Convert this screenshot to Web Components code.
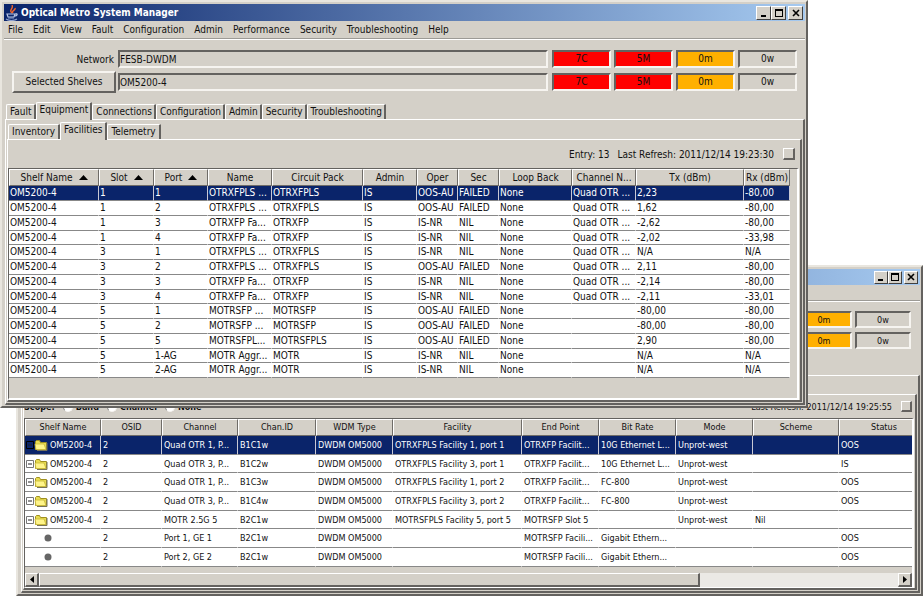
<!DOCTYPE html>
<html lang="en">
<head>
<meta charset="utf-8">
<title>Optical Metro System Manager</title>
<style>
  body {
    margin: 0;
    background: #fff;
    color: #111;
    font-family: "DejaVu Sans Condensed", "DejaVu Sans", sans-serif;
  }
</style>
</head>
<body>
<metro-desktop></metro-desktop>

<script>
// Shared bevel colours
const COLORS = `
  :host {
    --face: #d4d0c8;
    --light: #f6f4f0;
    --dark: #64625f;
    --select: #0a246a;
  }
  * { box-sizing: border-box; }
  button, input { font: inherit; color: inherit; margin: 0; border-radius: 0; }
`;

class AppWindow extends HTMLElement {
  constructor() {
    super();
    this.attachShadow({ mode: 'open' });
    this.shadowRoot.innerHTML = `
      <style>
        ${COLORS}
        :host {
          display: block;
          background: var(--face);
          border: 2px solid;
          border-color: #e9e6df var(--dark) var(--dark) #e9e6df;
          padding: 2px 1px 1px 2px;
          font-size: var(--text, 10px);
          box-sizing: border-box;
        }
        .title {
          display: flex;
          align-items: center;
          gap: 2px;
          height: var(--title-height, 17px);
          padding: 0 2px 0 1px;
          background: linear-gradient(to right, #0a246a, #a6caf0);
          color: #fff;
        }
        h1 { flex: 1; margin: 0; font-size: inherit; line-height: 16px; white-space: nowrap; }
        .buttons { display: flex; }
        .buttons button {
          display: grid;
          place-items: center;
          width: var(--button-width, 15px);
          height: var(--button-height, 14px);
          padding: 0;
          background: var(--face);
          border: 1px solid;
          border-color: #fff #404040 #404040 #fff;
          color: #000;
        }
        .buttons button:last-child { margin-left: 2px; }
        svg { display: block; }
      </style>
      <div class="title">
        <svg width="14" height="16" viewBox="0 0 14 16" fill="none">
          <path d="M7 8C3 5 9 4 7 0M8 8c-2-2 3-3 2-5" stroke="#f0642c" stroke-width="1.4"/>
          <path d="M2 9h8l-1 3H3zM10 9c3-1 3 2-1 2" stroke="#b8c6e6" stroke-width="1.2"/>
          <path d="M3 13h6M1 14c3 2 8 2 11 0" stroke="#8ea2d0" stroke-width="1.2"/>
        </svg>
        <h1></h1>
        <div class="buttons">
          <button aria-label="Minimize"><svg width="10" height="10"><path d="M2 7h5v2H2z"/></svg></button>
          <button aria-label="Maximize"><svg width="10" height="10"><path d="M1 1h8v8H1zM2 3v5h6V3z" fill-rule="evenodd"/></svg></button>
          <button aria-label="Close"><svg width="10" height="10"><path d="M2 2l6 6M8 2l-6 6" stroke="#000" stroke-width="1.6"/></svg></button>
        </div>
      </div>
      <slot></slot>
    `;
    this.shadowRoot.querySelector('h1').textContent = this.getAttribute('heading') || '';
  }
}

customElements.define('app-window', AppWindow);

class MenuBar extends HTMLElement {
  constructor() {
    super();
    this.attachShadow({ mode: 'open' });
    const items = (this.getAttribute('items') || '').split(',').filter(Boolean);
    this.shadowRoot.innerHTML = `
      <style>
        ${COLORS}
        :host { display: block; }
        nav {
          display: flex;
          gap: 10px;
          height: var(--menu-height, 18px);
          padding: 0 4px;
          border-bottom: 1px solid #9c9a95;
          box-shadow: 0 1px #fff;
        }
        button { border: 0; padding: 0; background: none; }
      </style>
      <nav>${items.map(item => `<button>${item}</button>`).join('')}</nav>
    `;
  }
}

customElements.define('menu-bar', MenuBar);

class AlarmRow extends HTMLElement {
  constructor() {
    super();
    this.attachShadow({ mode: 'open' });
    const label = this.getAttribute('label');
    const value = this.getAttribute('value');
    const head = this.hasAttribute('action')
      ? `<button id="head">${label}</button>`
      : `<label for="field">${label || ''}</label>`;
    const field = `<input id="field" readonly value="${value || ''}" aria-label="${label || ''}">`;
    const alarms = this.getAttribute('alarms').split(',');
    this.shadowRoot.innerHTML = `
      <style>
        ${COLORS}
        :host { display: flex; align-items: center; min-height: var(--row-height, 18px); }
        label, button { flex: 0 0 104px; margin-right: 2px; }
        label { text-align: right; padding-right: 2px; }
        button {
          height: 22px;
          padding: 0 0 1px;
          background: var(--face);
          border: 2px solid;
          border-color: var(--light) var(--dark) var(--dark) var(--light);
        }
        input, .alarm {
          height: var(--row-height, 18px);
          background: var(--face);
          border: 2px solid;
          border-color: var(--dark) var(--light) var(--light) var(--dark);
        }
        input { flex: 1; min-width: 0; padding: 0; outline: 0; }
        .alarms { display: flex; gap: 3px; margin-left: auto; padding-left: 4px; }
        .alarm {
          width: var(--alarm-width, 59px);
          line-height: 14px;
          text-align: center;
        }
        .C, .M { background: #f00; }
        .m { background: #ffb000; }
      </style>
      ${label ? head + field : ''}
      <div class="alarms">
        ${alarms.map(a => `<div class="alarm ${a.slice(-1)}">${a}</div>`).join('')}
      </div>
    `;
  }
}

customElements.define('alarm-row', AlarmRow);

class TabPanel extends HTMLElement {
  constructor() {
    super();
    this.attachShadow({ mode: 'open' });
    const tabs = (this.getAttribute('tabs') || '').split(',').filter(Boolean);
    const selected = this.getAttribute('selected');
    this.shadowRoot.innerHTML = `
      <style>
        ${COLORS}
        :host { display: block; }
        .tabs {
          display: flex;
          align-items: flex-end;
          height: var(--tabs-height, 17px);
          padding-left: 1px;
        }
        button {
          height: 15px;
          padding: 0 var(--tab-right, 3px) 0 3px;
          background: var(--face);
          border: solid;
          border-width: 1px 2px 0 1px;
          border-color: #fff var(--dark) #fff #fff;
          border-radius: 2px 1px 0 0;
          line-height: 14px;
        }
        button[aria-selected=true] { height: 18px; margin-bottom: -1px; padding-bottom: 4px; line-height: 13px; }
        .panel {
          border: solid;
          border-width: 1px 2px 2px 1px;
          border-color: #fff var(--dark) var(--dark) #fff;
          padding: var(--panel-padding, 0);
        }
      </style>
      <div class="tabs" role="tablist">
        ${tabs.map(tab => `<button role="tab" aria-selected="${tab === selected}">${tab}</button>`).join('')}
      </div>
      <div class="panel"><slot></slot></div>
    `;
  }
}

customElements.define('tab-panel', TabPanel);

class StatusBar extends HTMLElement {
  constructor() {
    super();
    this.attachShadow({ mode: 'open' });
    this.shadowRoot.innerHTML = `
      <style>
        ${COLORS}
        :host {
          display: flex;
          align-items: center;
          justify-content: flex-end;
          gap: 8px;
          height: var(--status-height, 28px);
          padding-right: var(--status-right, 5px);
          white-space: nowrap;
        }
        slot[name=start] { display: flex; margin-right: auto; }
        button {
          width: var(--box, 12px);
          height: var(--box, 12px);
          padding: 0;
          margin-left: 1px;
          background: var(--face);
          border: solid;
          border-width: 1px 2px 2px 1px;
          border-color: #fff var(--dark) var(--dark) #fff;
        }
      </style>
      <slot name="start"></slot>
      <slot></slot>
      <button aria-label="Refresh"></button>
    `;
  }
}

customElements.define('status-bar', StatusBar);

class ScopePicker extends HTMLElement {
  constructor() {
    super();
    this.attachShadow({ mode: 'open' });
    this.shadowRoot.innerHTML = `
      <style>
        ${COLORS}
        :host { display: flex; align-items: center; gap: 8px; font-weight: bold; }
        label { display: flex; align-items: center; gap: 3px; }
        input {
          appearance: none;
          width: 10px;
          height: 10px;
          background: #fff;
          border: 1px solid;
          border-color: #808080 #f6f4f0 #f6f4f0 #808080;
          border-radius: 50%;
        }
      </style>
      <span>Scope:</span>
      ${['Band', 'Channel', 'None'].map(name =>
        `<label><input type="radio" name="scope">${name}</label>`).join('')}
    `;
  }
}

customElements.define('scope-picker', ScopePicker);

class DataTable extends HTMLElement {
  constructor() {
    super();
    this.attachShadow({ mode: 'open' });
  }

  // columns: [title, width, sorted], a width of 0 takes the free space
  setData(columns, rows, tree = false) {
    const icon = `
      <svg class="node" width="22" height="14" viewBox="0 0 22 14">
        <path d="M.5 3.5h7v7h-7z" fill="#fff" stroke="#777"/><path d="M2 6.5h4v1H2z" fill="#222"/>
        <path d="M9.500 11.500v-8l1-1h3l1 2h6v7z" fill="#e8dc50" stroke="#a09020"/>
        <path d="M10 11.500l-1-5.500h9l2 5.500z" fill="#fff58a" stroke="#c8b838" stroke-width=".8"/>
        <path d="M21 5v7.500H11" fill="none" stroke="#77735a"/>
      </svg>`;
    const leaf = `
      <svg class="leaf" width="8" height="8"><circle cx="4" cy="4" r="3.500" fill="#666"/></svg>`;
    const arrow = `<svg class="arrow" width="9" height="5"><path d="M0 5L4.500 0 9 5z"/></svg>`;

    const cell = (text, i) => {
      if (!tree || i > 0) return `<td>${text}</td>`;
      return `<td class="tree">${text ? icon + text : leaf}</td>`;
    };

    this.shadowRoot.innerHTML = `
      <style>
        ${COLORS}
        :host {
          display: block;
          overflow: hidden;
          margin-right: 1px;
          border: solid;
          border-width: 1px 2px var(--bottom-border, 2px) 1px;
          border-color: var(--dark) #fff #fff var(--dark);
        }
        .view { overflow: hidden; padding: 0 var(--view-right, 0) var(--view-bottom, 0) 0; }
        table { width: 100%; table-layout: fixed; border-spacing: 0; }
        th, td { overflow: hidden; white-space: nowrap; padding: 0; }
        th {
          height: 17px;
          font-weight: normal;
          line-height: 15px;
          border: 1px solid;
          border-color: #fff #6f6c68 #6f6c68 #fff;
        }
        td {
          height: var(--line, 15px);
          padding-left: var(--cell-left, 1px);
          background: #fff;
          line-height: 12px;
          border-bottom: 1px solid #888;
          border-right: 1px solid #fff;
        }
        /* keeps the average pitch just under the full line */
        tbody tr:nth-child(${tree ? '3n+2' : '4n'}) td { height: var(--short-line, 14px); }
        tr.selected td { background: var(--select); color: #fff; border-right-color: #c8c8d4; }
        .arrow { margin: 0 0 1px 6px; }
        td.tree { padding-left: 1px; }
        .node { vertical-align: middle; margin-right: 2px; }
        tr.selected .node path:first-child { fill: var(--select); stroke: #000; }
        .leaf { display: block; margin-left: 18px; }
      </style>
      <div class="view">
        <table>
          <colgroup>
            ${columns.map(([, width]) => `<col${width ? ` style="width: ${width}px"` : ''}>`).join('')}
          </colgroup>
          <thead>
            <tr>${columns.map(([title, , sorted]) => `<th>${title}${sorted ? arrow : ''}</th>`).join('')}</tr>
          </thead>
          <tbody>
            ${rows.map((row, i) =>
              `<tr${i === 0 ? ' class="selected"' : ''}>${row.map(cell).join('')}</tr>`).join('')}
          </tbody>
        </table>
      </div>
      <slot></slot>
    `;
  }
}

customElements.define('data-table', DataTable);

class ScrollStrip extends HTMLElement {
  constructor() {
    super();
    this.attachShadow({ mode: 'open' });
    this.shadowRoot.innerHTML = `
      <style>
        ${COLORS}
        :host { display: flex; height: 14px; background: #ebe9e5; }
        button, .thumb {
          background: var(--face);
          border: solid;
          border-width: 1px 2px 2px 1px;
          border-color: #fff var(--dark) var(--dark) #fff;
        }
        button { display: grid; place-items: center; width: 14px; padding: 0; }
        .track { flex: 1; display: flex; }
        .thumb { width: 77%; }
      </style>
      <button aria-label="Scroll left"><svg width="4" height="7"><path d="M4 0v7L0 3.500z"/></svg></button>
      <div class="track"><div class="thumb"></div></div>
      <button aria-label="Scroll right"><svg width="4" height="7"><path d="M0 0v7l4-3.500z"/></svg></button>
    `;
  }
}

customElements.define('scroll-strip', ScrollStrip);

const facilityColumns = [
  ['Shelf Name', 90, true], ['Slot', 55, true], ['Port', 54, true], ['Name', 64],
  ['Circuit Pack', 91], ['Admin', 54], ['Oper', 41], ['Sec', 41], ['Loop Back', 73],
  ['Channel N...', 64], ['Tx (dBm)', 0], ['Rx (dBm)', 46]
];

const facilities = [
  ['1', '1', 'OTRXFPLS ...', 'OTRXFPLS', 'OOS-AU', 'FAILED', 'Quad OTR ...', '2,23', '-80,00'],
  ['1', '2', 'OTRXFPLS ...', 'OTRXFPLS', 'OOS-AU', 'FAILED', 'Quad OTR ...', '1,62', '-80,00'],
  ['1', '3', 'OTRXFP Fa...', 'OTRXFP', 'IS-NR', 'NIL', 'Quad OTR ...', '-2,62', '-80,00'],
  ['1', '4', 'OTRXFP Fa...', 'OTRXFP', 'IS-NR', 'NIL', 'Quad OTR ...', '-2,02', '-33,98'],
  ['3', '1', 'OTRXFPLS ...', 'OTRXFPLS', 'IS-NR', 'NIL', 'Quad OTR ...', 'N/A', 'N/A'],
  ['3', '2', 'OTRXFPLS ...', 'OTRXFPLS', 'OOS-AU', 'FAILED', 'Quad OTR ...', '2,11', '-80,00'],
  ['3', '3', 'OTRXFP Fa...', 'OTRXFP', 'IS-NR', 'NIL', 'Quad OTR ...', '-2,14', '-80,00'],
  ['3', '4', 'OTRXFP Fa...', 'OTRXFP', 'IS-NR', 'NIL', 'Quad OTR ...', '-2,11', '-33,01'],
  ['5', '1', 'MOTRSFP ...', 'MOTRSFP', 'OOS-AU', 'FAILED', '', '-80,00', '-80,00'],
  ['5', '2', 'MOTRSFP ...', 'MOTRSFP', 'OOS-AU', 'FAILED', '', '-80,00', '-80,00'],
  ['5', '5', 'MOTRSFPL...', 'MOTRSFPLS', 'OOS-AU', 'FAILED', '', '2,90', '-80,00'],
  ['5', '1-AG', 'MOTR Aggr...', 'MOTR', 'IS-NR', 'NIL', '', 'N/A', 'N/A'],
  ['5', '2-AG', 'MOTR Aggr...', 'MOTR', 'IS-NR', 'NIL', '', 'N/A', 'N/A']
].map(([slot, port, name, pack, oper, sec, channel, tx, rx]) =>
  ['OM5200-4', slot, port, name, pack, 'IS', oper, sec, 'None', channel, tx, rx]);

const channelColumns = [
  ['Shelf Name', 76], ['OSID', 61], ['Channel', 76], ['Chan.ID', 78], ['WDM Type', 77],
  ['Facility', 129], ['End Point', 77], ['Bit Rate', 77], ['Mode', 77], ['Scheme', 86], ['Status', 90]
];

const channels = [
  ['OM5200-4', 'Quad OTR 1, P...', 'B1C1w', 'OTRXFPLS Facility 1, port 1', 'OTRXFP Facilit...', '10G Ethernet L...', 'Unprot-west', '', 'OOS'],
  ['OM5200-4', 'Quad OTR 3, P...', 'B1C2w', 'OTRXFPLS Facility 3, port 1', 'OTRXFP Facilit...', '10G Ethernet L...', 'Unprot-west', '', 'IS'],
  ['OM5200-4', 'Quad OTR 1, P...', 'B1C3w', 'OTRXFPLS Facility 1, port 2', 'OTRXFP Facilit...', 'FC-800', 'Unprot-west', '', 'OOS'],
  ['OM5200-4', 'Quad OTR 3, P...', 'B1C4w', 'OTRXFPLS Facility 3, port 2', 'OTRXFP Facilit...', 'FC-800', 'Unprot-west', '', 'OOS'],
  ['OM5200-4', 'MOTR 2.5G 5', 'B2C1w', 'MOTRSFPLS Facility 5, port 5', 'MOTRSFP Slot 5', '', 'Unprot-west', 'Nil', ''],
  ['', 'Port 1, GE 1', 'B2C1w', '', 'MOTRSFP Facili...', 'Gigabit Ethern...', '', '', 'OOS'],
  ['', 'Port 2, GE 2', 'B2C1w', '', 'MOTRSFP Facili...', 'Gigabit Ethern...', '', '', 'OOS']
].map(([shelf, channel, id, facility, end, rate, mode, scheme, status]) =>
  [shelf, '2', channel, id, 'DWDM OM5000', facility, end, rate, mode, scheme, status]);

class MetroDesktop extends HTMLElement {
  constructor() {
    super();
    this.attachShadow({ mode: 'open' });
  }

  connectedCallback() {
    this.shadowRoot.innerHTML = `
      <style>
        :host { display: block; position: relative; height: 100vh; min-height: 597px; overflow: hidden; }
        app-window { position: absolute; }
        .front { top: 0; left: 0; right: 115px; }
        .back {
          top: 265px; left: 16px; right: 0;
          --text: 9px;
          --title-height: 16px;
          --button-width: 14px;
          --button-height: 13px;
          --menu-height: 16px;
          --row-height: 17px;
          --alarm-width: 56px;
          --tabs-height: 16px;
          --status-height: 23px;
          --status-right: 3px;
          --box: 11px;
          --line: 19px;
          --short-line: 18px;
          --cell-left: 2px;
          --view-bottom: 6px;
          --bottom-border: 1px;
        }
        .rows { display: flex; flex-direction: column; gap: 3px; padding: 11px 8px 9px; }
        .back .rows { gap: 4px; padding: 10px 9px; }
        .outer { margin-left: 1px; --panel-padding: 2px 1px 1px 1px; --tab-right: 2px; }
        .inner { --panel-padding: 0; --tab-right: 3px; }
        .front data-table { --view-right: 7px; --view-bottom: 20px; }
      </style>

      <app-window class="back">
        <menu-bar></menu-bar>
        <div class="rows">
          <alarm-row alarms="0m,0w"></alarm-row>
          <alarm-row alarms="0m,0w"></alarm-row>
        </div>
        <tab-panel class="outer">
          <tab-panel class="inner">
            <status-bar>
              <scope-picker slot="start"></scope-picker>
              <span>Last Refresh: 2011/12/14 19:25:55</span>
            </status-bar>
            <data-table id="channels"><scroll-strip></scroll-strip></data-table>
          </tab-panel>
        </tab-panel>
      </app-window>

      <app-window class="front" heading="Optical Metro System Manager">
        <menu-bar items="File,Edit,View,Fault,Configuration,Admin,Performance,Security,Troubleshooting,Help"></menu-bar>
        <div class="rows">
          <alarm-row label="Network" value="FESB-DWDM" alarms="7C,5M,0m,0w"></alarm-row>
          <alarm-row action label="Selected Shelves" value="OM5200-4" alarms="7C,5M,0m,0w"></alarm-row>
        </div>
        <tab-panel class="outer" selected="Equipment"
            tabs="Fault,Equipment,Connections,Configuration,Admin,Security,Troubleshooting">
          <tab-panel class="inner" selected="Facilities" tabs="Inventory,Facilities,Telemetry">
            <status-bar>
              <span>Entry: 13</span>
              <span>Last Refresh: 2011/12/14 19:23:30</span>
            </status-bar>
            <data-table id="facilities"></data-table>
          </tab-panel>
        </tab-panel>
      </app-window>
    `;

    this.shadowRoot.getElementById('facilities').setData(facilityColumns, facilities);
    this.shadowRoot.getElementById('channels').setData(channelColumns, channels, true);
  }
}

customElements.define('metro-desktop', MetroDesktop);
</script>
</body>
</html>
